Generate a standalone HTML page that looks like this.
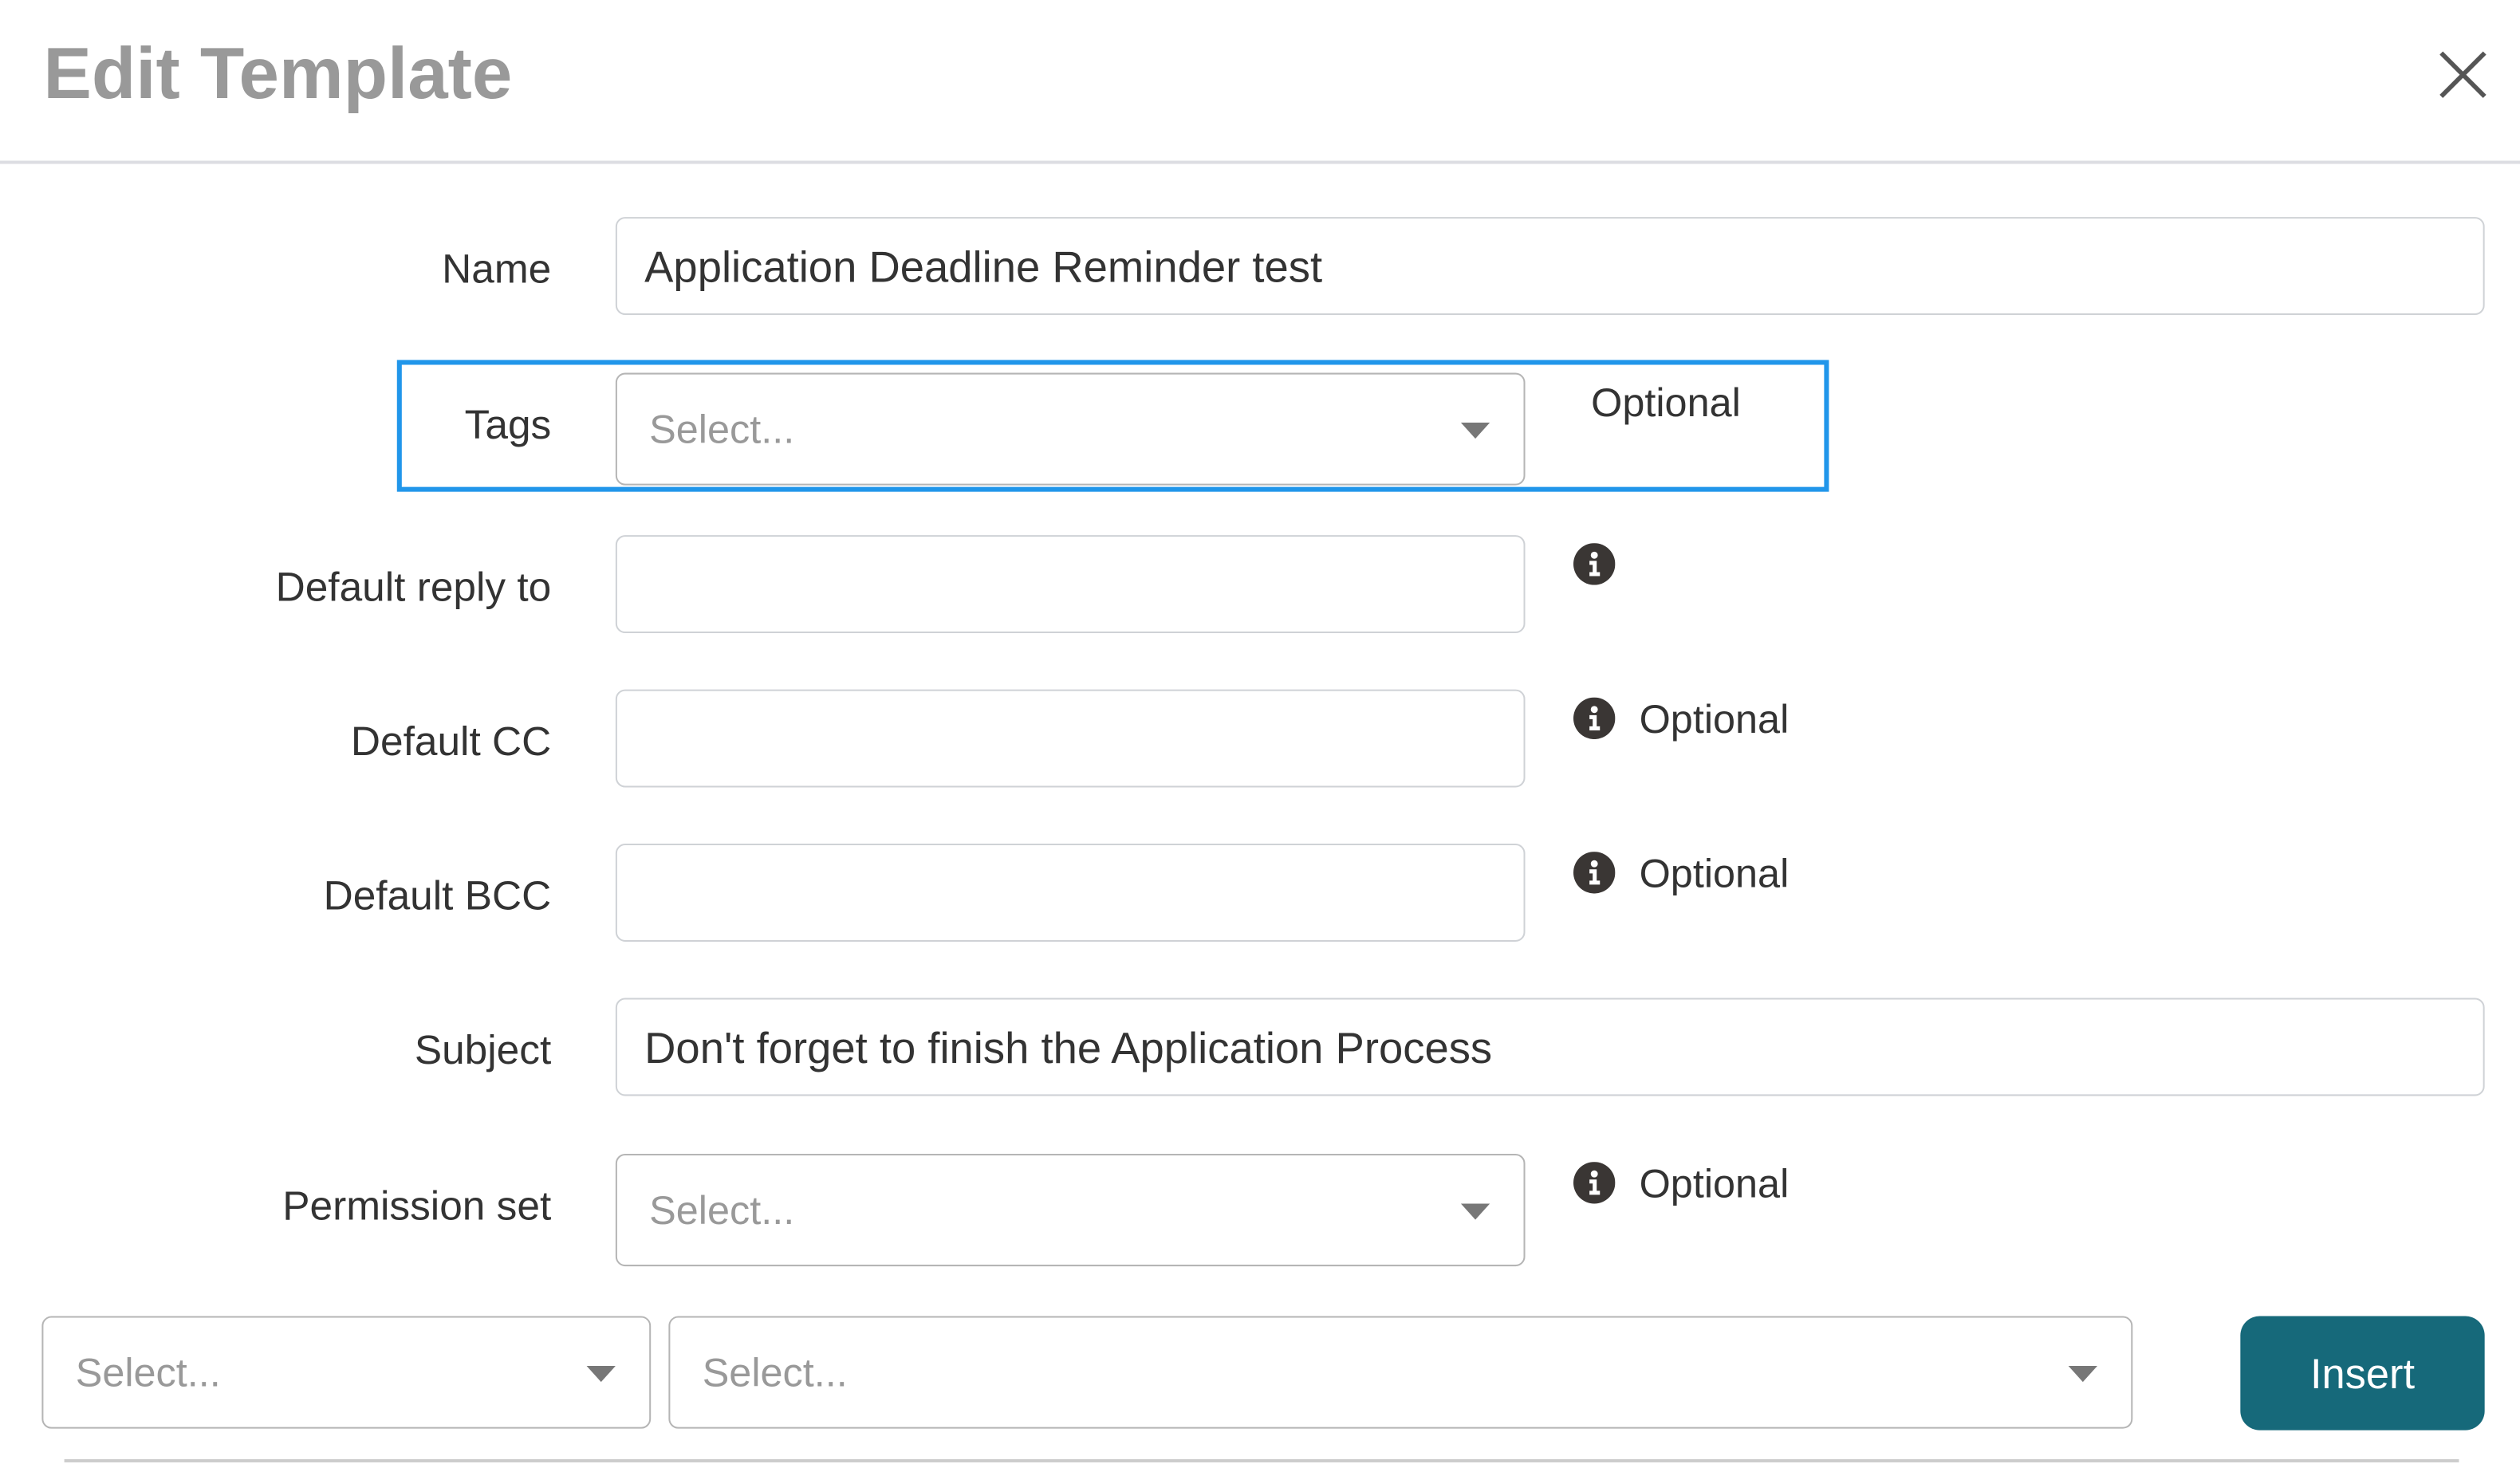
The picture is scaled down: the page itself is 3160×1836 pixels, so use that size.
<!DOCTYPE html>
<html><head><meta charset="utf-8"><style>
html,body{margin:0;padding:0;background:#fff;overflow:hidden}
body{width:3160px;height:1836px;position:relative}
#w{position:absolute;left:0;top:0;width:1568px;height:911px;transform:scale(2.01531);transform-origin:0 0;font-family:"Liberation Sans",sans-serif;color:#333}
.a{position:absolute}
.lbl{position:absolute;right:1225px;font-size:25.5px;color:#333;white-space:nowrap}
.in{position:absolute;border:1.5px solid #cfd2d6;border-radius:6px;box-sizing:border-box;background:#fff}
.sel{position:absolute;border:1.5px solid #b5b5b5;border-radius:6px;box-sizing:border-box;background:#fff}
.ph{position:absolute;left:20px;top:50%;transform:translateY(-46%);font-size:25px;color:#999}
.arr{position:absolute;top:50%;margin-top:-4px;width:0;height:0;border-left:9px solid transparent;border-right:9px solid transparent;border-top:10px solid #777}
.txt{position:absolute;left:17px;top:50%;transform:translateY(-47%);font-size:27px;color:#333;white-space:nowrap}
.opt{position:absolute;font-size:25px;color:#333}
.info{position:absolute;width:26px;height:26px}
</style></head><body><div id="w">
<div class="a" style="left:27px;top:20px;font-size:45px;font-weight:bold;color:#999">Edit Template</div>
<svg class="a" style="left:1517px;top:31px" width="31" height="31" viewBox="0 0 31 31"><path d="M2 2L29 29M29 2L2 29" stroke="#555" stroke-width="2.8"/></svg>
<div class="a" style="left:0;top:100px;width:1568px;height:2px;background:#dcdde2"></div>

<div class="lbl" style="top:154px">Name</div>
<div class="in" style="left:383px;top:135px;width:1163px;height:61px"><div class="txt">Application Deadline Reminder test</div></div>

<div class="a" style="left:247px;top:224px;width:891px;height:82px;border:3px solid #2196ea;box-sizing:border-box"></div>
<div class="lbl" style="top:251px">Tags</div>
<div class="sel" style="left:383px;top:232px;width:566px;height:70px"><div class="ph">Select...</div><div class="arr" style="right:21px"></div></div>
<div class="opt" style="left:990px;top:237px">Optional</div>

<div class="lbl" style="top:352px">Default reply to</div>
<div class="in" style="left:383px;top:333px;width:566px;height:61px"></div>

<div class="lbl" style="top:448px">Default CC</div>
<div class="in" style="left:383px;top:429px;width:566px;height:61px"></div>
<div class="opt" style="left:1020px;top:434px">Optional</div>

<div class="lbl" style="top:544px">Default BCC</div>
<div class="in" style="left:383px;top:525px;width:566px;height:61px"></div>
<div class="opt" style="left:1020px;top:530px">Optional</div>

<div class="lbl" style="top:640px">Subject</div>
<div class="in" style="left:383px;top:621px;width:1163px;height:61px"><div class="txt">Don't forget to finish the Application Process</div></div>

<div class="lbl" style="top:737px">Permission set</div>
<div class="sel" style="left:383px;top:718px;width:566px;height:70px"><div class="ph">Select...</div><div class="arr" style="right:21px"></div></div>
<div class="opt" style="left:1020px;top:723px">Optional</div>

<svg class="info" style="left:979px;top:338px" viewBox="0 0 26 26"><circle cx="13" cy="13" r="13" fill="#3a3634"/><circle cx="13" cy="7.5" r="2.2" fill="#fff"/><path d="M10 11h4.5v7h2v2.5h-6.5V18h2v-4.5H10z" fill="#fff"/></svg>
<svg class="info" style="left:979px;top:434px" viewBox="0 0 26 26"><circle cx="13" cy="13" r="13" fill="#3a3634"/><circle cx="13" cy="7.5" r="2.2" fill="#fff"/><path d="M10 11h4.5v7h2v2.5h-6.5V18h2v-4.5H10z" fill="#fff"/></svg>
<svg class="info" style="left:979px;top:530px" viewBox="0 0 26 26"><circle cx="13" cy="13" r="13" fill="#3a3634"/><circle cx="13" cy="7.5" r="2.2" fill="#fff"/><path d="M10 11h4.5v7h2v2.5h-6.5V18h2v-4.5H10z" fill="#fff"/></svg>
<svg class="info" style="left:979px;top:723px" viewBox="0 0 26 26"><circle cx="13" cy="13" r="13" fill="#3a3634"/><circle cx="13" cy="7.5" r="2.2" fill="#fff"/><path d="M10 11h4.5v7h2v2.5h-6.5V18h2v-4.5H10z" fill="#fff"/></svg>

<div class="sel" style="left:26px;top:819px;width:379px;height:70px"><div class="ph">Select...</div><div class="arr" style="right:21px"></div></div>
<div class="sel" style="left:416px;top:819px;width:911px;height:70px"><div class="ph">Select...</div><div class="arr" style="right:21px"></div></div>
<div class="a" style="left:1394px;top:819px;width:152px;height:71px;background:#16697a;border-radius:12px;color:#fff;font-size:26px;text-align:center;line-height:72px">Insert</div>
<div class="a" style="left:40px;top:908px;width:1490px;height:2px;background:#ccc"></div>
</div></body></html>
